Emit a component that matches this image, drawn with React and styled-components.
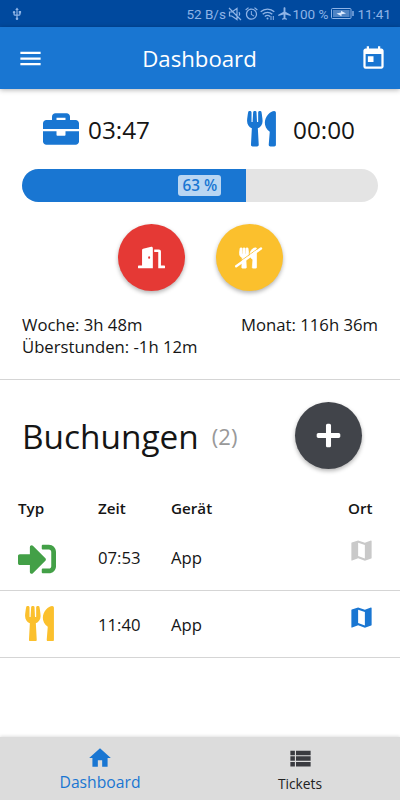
import React from 'react';
import styled, { createGlobalStyle } from 'styled-components';
import { MdMenu, MdToday, MdHome, MdViewList, MdMap, MdUsb, MdAlarm, MdAirplanemodeActive } from 'react-icons/md';
import { FaBriefcase, FaDoorOpen, FaPlus, FaSignInAlt, FaUtensils } from 'react-icons/fa';

const bookings = [
    { type: 'in', time: '07:53', device: 'App', located: false },
    { type: 'break', time: '11:40', device: 'App', located: true },
];

function NoCutlery() {
    return (
        <svg width="28" height="22" viewBox="0 0 28 22">
            <FaUtensils x="2.500" y=".5" size={21} color="#fff" stroke="#fff" strokeWidth="16" />
            <path d="M2 16.700 25 .1" stroke="#fbc02d" strokeWidth=".9" />
            <path d="M1.200 19.200 26 1.500" stroke="#fff" strokeWidth="2.400" strokeLinecap="round" />
        </svg>
    );
}

function MutedBell() {
    return (
        <svg width="14" height="14" viewBox="0 0 14 14" fill="none" stroke="currentColor" strokeWidth="1.200">
            <path d="M1.500 5v4h2.300L9 12.500V1.500L4 5zM1 1l12 12M11 5.200c.8 1 .8 2.500 0 3.500" />
        </svg>
    );
}

function Wifi() {
    return (
        <svg width="15" height="14" viewBox="0 0 15 14" fill="none" stroke="currentColor" strokeWidth="1.300">
            <path d="M.7 4.800c3.800-3.700 9.800-3.700 13.600 0M2.700 7.200c2.700-2.500 6.900-2.500 9.600 0M4.800 9.500c1.600-1.400 3.800-1.400 5.400 0" />
            <circle cx="7.500" cy="11.600" r="1" fill="currentColor" stroke="none" />
            <path d="M11 9v4M13.300 9v4" strokeWidth="1" />
        </svg>
    );
}

function Battery() {
    return (
        <svg width="23" height="11" viewBox="0 0 23 11">
            <rect x=".5" y=".5" width="19.500" height="10" rx="1" fill="none" stroke="currentColor" />
            <rect x="2" y="2" width="16.500" height="7" fill="#5084c4" />
            <path d="M5.500 5.500 10 4.600V2.800l5 2.700-4.500.8v1.900z" fill="#dceaff" />
            <path d="M22 3v5" stroke="currentColor" strokeWidth="1.400" />
        </svg>
    );
}

export default function App() {
    return (
        <>
            <GlobalStyle />
            <Screen>
                <StatusBar>
                    <MdUsb size={14} />
                    <StatusItems>
                        <Speed>52 B/s</Speed>
                        <MutedBell />
                        <MdAlarm size={15} />
                        <Wifi />
                        <MdAirplanemodeActive size={15} />
                        <Percent>100 %</Percent>
                        <Battery />
                        <Clock>11:41</Clock>
                    </StatusItems>
                </StatusBar>
                <AppBar>
                    <MdMenu size={27} />
                    <Title>Dashboard</Title>
                    <MdToday size={27} />
                </AppBar>
                <Overview>
                    <Timers>
                        <Timer>
                            <FaBriefcase size={36} color="#1976d2" />
                            <TimerValue $gap={9}>03:47</TimerValue>
                        </Timer>
                        <Timer>
                            <Cutlery color="#1976d2" />
                            <TimerValue $gap={17}>00:00</TimerValue>
                        </Timer>
                    </Timers>
                    <Progress>
                        <ProgressFill style={{ width: '63%' }}>
                            <ProgressLabel>63 %</ProgressLabel>
                        </ProgressFill>
                    </Progress>
                    <Actions>
                        <RoundButton $color="#e53935"><FaDoorOpen size={27} /></RoundButton>
                        <RoundButton $color="#fbc02d"><NoCutlery /></RoundButton>
                    </Actions>
                    <Totals>
                        <div>
                            <p>Woche: 3h 48m</p>
                            <p>Überstunden: -1h 12m</p>
                        </div>
                        <p>Monat: 116h 36m</p>
                    </Totals>
                </Overview>
                <BookingsHeader>
                    <Heading>Buchungen</Heading>
                    <Count>(2)</Count>
                    <RoundButton $color="#41444a"><FaPlus size={27} /></RoundButton>
                </BookingsHeader>
                <TableHead>
                    <span>Typ</span>
                    <span>Zeit</span>
                    <span>Gerät</span>
                    <span>Ort</span>
                </TableHead>
                {
                    bookings.map((booking) => (
                        <TableRow key={booking.time}>
                            <TypeCell $type={booking.type}>
                                {booking.type === 'in' ? <FaSignInAlt size={38} color="#43a047" /> : <Cutlery color="#fbc02d" />}
                            </TypeCell>
                            <span>{booking.time}</span>
                            <span>{booking.device}</span>
                            <MapCell $active={booking.located}><MdMap size={27} /></MapCell>
                        </TableRow>
                    ))
                }
                <BottomNav>
                    <NavItem $active>
                        <MdHome size={26} />
                        <span>Dashboard</span>
                    </NavItem>
                    <NavItem>
                        <MdViewList size={27} />
                        <span>Tickets</span>
                    </NavItem>
                </BottomNav>
            </Screen>
        </>
    )
}

const GlobalStyle = createGlobalStyle`
    * {
        box-sizing: border-box;
    }
    body {
        margin: 0;
        background: #fff;
    }
    p, h1, h2 {
        margin: 0;
        font-weight: 400;
    }
    svg {
        display: block;
        flex: none;
    }
`
const Cutlery = styled(FaUtensils)`
    width: 29px;
    height: 35.5px;
`
const Screen = styled.div`
    display: flex;
    flex-direction: column;
    width: 400px;
    height: 800px;
    overflow: hidden;
    background: #fff;
    color: #151515;
    font-family: "Open Sans", "Noto Sans", sans-serif;
    white-space: nowrap;
`
const StatusBar = styled.div`
    display: flex;
    align-items: center;
    justify-content: space-between;
    flex: none;
    height: 27px;
    padding: 0 9px 0 10px;
    background: #00499e;
    color: #8fb4e6;
    font: 13.5px Roboto, sans-serif;
`
const StatusItems = styled.div`
    display: flex;
    align-items: center;
    gap: 1.5px;
`
const Speed = styled.span`
    margin-right: 1px;
`
const Percent = styled.span`
    margin: 0 1px 0 -1px;
`
const Clock = styled.span`
    margin-left: 2px;
`
const AppBar = styled.header`
    display: flex;
    align-items: center;
    justify-content: space-between;
    flex: none;
    height: 62px;
    padding: 0 13px 0 17px;
    background: #1976d2;
    color: #fff;
    box-shadow: 0 1px 5px rgba(0, 0, 0, .3);
`
const Title = styled.h1`
    margin-right: 5px;
    font-size: 22.2px;
`
const Overview = styled.section`
    flex: none;
    height: 291px;
    padding: 19px 22px 0;
    border-bottom: 1px solid #d5d5d5;
`
const Timers = styled.div`
    display: flex;
    justify-content: space-between;
    padding: 0 23px 0 21px;
`
const Timer = styled.div`
    display: flex;
    align-items: center;
    height: 42px;
`
const TimerValue = styled.span`
    margin-left: ${props => props.$gap}px;
    font-size: 24.3px;
`
const Progress = styled.div`
    height: 33px;
    margin-top: 19px;
    border-radius: 17px;
    background: #e4e4e4;
    overflow: hidden;
`
const ProgressFill = styled.div`
    display: flex;
    align-items: center;
    justify-content: flex-end;
    height: 100%;
    padding-right: 25px;
    background: #1976d2;
`
const ProgressLabel = styled.span`
    width: 43px;
    border-radius: 3px;
    background: #bad6f2;
    color: #1976d2;
    font-size: 15.3px;
    font-weight: 600;
    line-height: 21px;
    text-align: center;
`
const Actions = styled.div`
    display: flex;
    justify-content: center;
    gap: 31px;
    margin-top: 22px;
`
const RoundButton = styled.button`
    display: flex;
    align-items: center;
    justify-content: center;
    width: 67px;
    height: 67px;
    padding: 0;
    border: none;
    border-radius: 50%;
    background: ${props => props.$color};
    color: #fff;
    box-shadow: 0 2px 4px rgba(0, 0, 0, .3);
`
const Totals = styled.div`
    display: flex;
    justify-content: space-between;
    margin-top: 23px;
    font-size: 16.7px;
    line-height: 22px;
`
const BookingsHeader = styled.div`
    display: flex;
    align-items: center;
    flex: none;
    height: 111px;
    padding: 0 38px 0 22px;

    ${RoundButton} {
        margin-left: auto;
    }
`
const Heading = styled.h2`
    font-size: 33.4px;
`
const Count = styled.span`
    margin-left: 13px;
    color: #999;
    font-size: 22px;
`
const TableHead = styled.div`
    display: grid;
    grid-template-columns: 80px 73px 177px 52px;
    align-items: center;
    flex: none;
    height: 33px;
    padding-left: 18px;
    font-size: 15.2px;
    font-weight: 600;
`
const TableRow = styled(TableHead)`
    height: 67px;
    border-bottom: 1px solid #d5d5d5;
    font-size: 16.7px;
    font-weight: 400;
`
const TypeCell = styled.div`
    padding: ${props => props.$type === 'break' ? '0 0 1px 7px' : '3px 0 0'};
`
const MapCell = styled.div`
    padding-bottom: 14px;
    color: ${props => props.$active ? '#1976d2' : '#c9c9c9'};
`
const BottomNav = styled.nav`
    display: flex;
    flex: none;
    height: 63px;
    margin-top: auto;
    background: #dcdcdc;
    box-shadow: 0 -1px 3px rgba(0, 0, 0, .12);
`
const NavItem = styled.div`
    display: flex;
    flex: 1;
    flex-direction: column;
    align-items: center;
    padding-top: 8px;
    color: ${props => props.$active ? '#1976d2' : '#222'};
    font-size: ${props => props.$active ? 15.7 : 13.8}px;
    line-height: 23px;

    svg {
        color: ${props => props.$active ? '#1976d2' : '#3a3b40'};
    }
`
